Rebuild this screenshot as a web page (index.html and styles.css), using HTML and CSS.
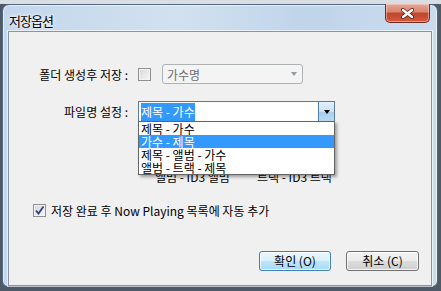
FILE: index.html
```html
<!DOCTYPE html>
<html>
  <head>
    <meta charset="utf-8" />
    <title>저장옵션</title>
    <link rel="stylesheet" href="styles.css">
  </head>
  <body>
    <div class="window">
      <div class="titlebar">
        <span class="title">저장옵션</span>
        <button class="close">
          <svg width="15" height="11" viewBox="0 0 15 11">
            <path d="M3 2 L12 9 M12 2 L3 9" stroke="#5a2018" stroke-width="4" stroke-linecap="round" />
            <path d="M3 2 L12 9 M12 2 L3 9" stroke="#fff" stroke-width="2.4" stroke-linecap="round" />
          </svg>
        </button>
      </div>

      <div class="client">
        <div class="field">
          <span class="field-label">폴더 생성후 저장 :</span>
          <span class="checkbox"></span>
          <div class="combo combo-disabled">
            <span>가수명</span>
            <span class="arrow arrow-grey"></span>
          </div>
        </div>

        <div class="field field-name">
          <span class="field-label">파일명 설정 :</span>
          <div class="combo combo-open">
            <span class="combo-text"><span class="selected">제목 - 가수</span></span>
            <span class="drop"><span class="arrow"></span></span>
            <ul class="droplist">
              <li>제목 - 가수</li>
              <li class="active">가수 - 제목</li>
              <li>제목 - 앨범 - 가수</li>
              <li>앨범 - 트랙 - 제목</li>
            </ul>
          </div>
        </div>

        <div class="tags">
          <span class="tag">앨범 - ID3 앨범</span>
          <span class="tag">트랙 - ID3 트랙</span>
        </div>

        <label class="check-row">
          <span class="checkbox checked">
            <svg width="11" height="11" viewBox="0 0 11 11">
              <path d="M2 5.5 L4.5 8.5 L9.5 1.5" fill="none" stroke="#2c3f86" stroke-width="1.8" />
            </svg>
          </span>
          저장 완료 후 Now Playing 목록에 자동 추가
        </label>

        <div class="buttons">
          <button class="btn btn-default">확인 (O)</button>
          <button class="btn">취소 (C)</button>
        </div>
      </div>
    </div>
  </body>
</html>
```

FILE: styles.css
```css
body {
  margin: 0;
  width: 441px;
  height: 291px;
  overflow: hidden;
  background: linear-gradient(to bottom, #d9dee4 0, #d9dee4 4px, #4f5a68 4px);
  font-family: "Noto Sans CJK KR", "Noto Sans", sans-serif;
  font-size: 12px;
  color: #000;
}

.window {
  margin: 4px 0 0 2px;
  width: 434px;
  height: 281px;
  border: 1px solid #56687e;
  border-radius: 7px 7px 6px 6px;
  background: linear-gradient(to right, #c3d6eb, #d2e1f0 40%, #c0d4ea 70%, #cbdcee);
  box-shadow: inset 0 0 0 1px rgba(255, 255, 255, 0.55);
  display: flex;
  flex-direction: column;
}

.titlebar {
  height: 26px;
  display: flex;
  justify-content: space-between;
  align-items: flex-start;
  padding-left: 6px;
}

.title {
  font-size: 13px;
  letter-spacing: -1px;
  line-height: 22px;
  margin-top: 5px;
  text-shadow: 0 0 6px #fff, 0 0 3px #fff;
}

.close {
  margin: -1px 7px 0 0;
  width: 45px;
  height: 19px;
  padding: 0;
  border: 1px solid #6e2c24;
  border-top: none;
  border-radius: 0 0 5px 5px;
  background: linear-gradient(to bottom, #e7a797 0, #d98471 45%, #c0432c 50%, #d55a3c 100%);
  box-shadow: inset 0 0 0 1px rgba(255, 220, 210, 0.5);
  display: flex;
  align-items: center;
  justify-content: center;
}

.client {
  margin: 0 5px;
  height: 248px;
  background: #f0f0f0;
  border: 1px solid #8395aa;
  box-shadow: 0 0 0 1px rgba(255, 255, 255, 0.6);
  display: flex;
  flex-direction: column;
  padding-top: 32px;
  box-sizing: content-box;
}

.field {
  display: flex;
  align-items: center;
  height: 20px;
}

.field-name {
  margin-top: 17px;
  height: 21px;
}

.field-label {
  width: 119px;
  margin-right: 10px;
  text-align: right;
  white-space: nowrap;
}

.checkbox {
  width: 11px;
  height: 11px;
  border: 1px solid #8f8f8f;
  background: linear-gradient(135deg, #d6d6d6, #f8f8f8);
  box-shadow: inset 0 0 0 1px #f4f4f4;
  display: flex;
  align-items: center;
  justify-content: center;
}

.combo {
  position: relative;
  display: flex;
  align-items: center;
  box-sizing: border-box;
}

.combo-disabled {
  margin-left: 11px;
  width: 141px;
  height: 20px;
  border: 1px solid #adb2b5;
  border-radius: 3px;
  background: #f4f4f4;
  color: #6d6d6d;
  padding-left: 4px;
  justify-content: space-between;
}

.arrow {
  width: 0;
  height: 0;
  border-left: 3.5px solid transparent;
  border-right: 3.5px solid transparent;
  border-top: 4px solid #000;
}

.arrow-grey {
  border-top-color: #9a9a9a;
  margin-right: 5px;
}

.combo-open {
  width: 197px;
  height: 21px;
  border: 1px solid #5b7a96;
  background: #fff;
}

.combo-text {
  flex: 1;
  padding-left: 2px;
  line-height: 15px;
}

.selected {
  background: #3399ff;
  color: #fff;
  padding-bottom: 1px;
}

.drop {
  width: 15px;
  height: 19px;
  border-left: 1px solid #4c82b2;
  background: linear-gradient(to bottom, #e4f0fb, #cbe2f5 50%, #a9cdeb 51%, #bcd9f1);
  display: flex;
  align-items: center;
  justify-content: center;
}

.droplist {
  position: absolute;
  top: 100%;
  left: -1px;
  width: 197px;
  box-sizing: border-box;
  margin: 0;
  padding: 0;
  list-style: none;
  border: 1px solid #646464;
  background: #fff;
  box-shadow: 2px 2px 3px rgba(0, 0, 0, 0.35);
  z-index: 2;
}

.droplist li {
  height: 13px;
  line-height: 13px;
  padding-left: 2px;
  white-space: nowrap;
}

.droplist .active {
  background: #3399ff;
  color: #fff;
}

.tags {
  margin-top: 48px;
  height: 14px;
  line-height: 14px;
  display: flex;
  padding-left: 146px;
}

.tag {
  width: 102px;
  white-space: nowrap;
}

.check-row {
  margin-top: 19px;
  height: 14px;
  display: flex;
  align-items: center;
  gap: 5px;
  padding-left: 24px;
  white-space: nowrap;
}

.buttons {
  margin-top: 34px;
  display: flex;
  justify-content: flex-end;
  gap: 15px;
  padding-right: 12px;
}

.btn {
  width: 73px;
  height: 20px;
  padding: 0;
  font-family: inherit;
  font-size: 12px;
  line-height: 18px;
  color: #000;
  border: 1px solid #707070;
  border-radius: 3px;
  background: linear-gradient(to bottom, #f2f2f2, #ebebeb 50%, #dddddd 51%, #cfcfcf);
  box-shadow: inset 0 0 0 1px rgba(255, 255, 255, 0.8);
}

.btn-default {
  width: 72px;
  border-color: #3c7fb1;
  background: linear-gradient(to bottom, #eaf6fd, #d9f0fc 50%, #bee6fd 51%, #a7d9f5);
}
```
